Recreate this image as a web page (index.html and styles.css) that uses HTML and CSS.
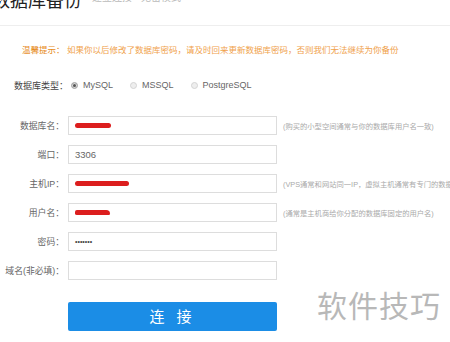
FILE: index.html
```html
<!DOCTYPE html>
<html lang="zh-CN">

<head>
  <meta charset="UTF-8">
  <title>数据库备份</title>
  <link rel="stylesheet" href="styles.css">
</head>

<body>
  <div class="page-header">
    <h1 class="page-title">数据库备份</h1>
    <span class="page-sub">建立连接 · 无密模式</span>
  </div>

  <p class="tip"><b>温馨提示：</b> 如果你以后修改了数据库密码，请及时回来更新数据库密码，否则我们无法继续为你备份</p>

  <div class="db-type">
    <span class="db-type-label">数据库类型：</span>
    <label class="radio-item"><span class="radio checked"></span>MySQL</label>
    <label class="radio-item"><span class="radio"></span>MSSQL</label>
    <label class="radio-item"><span class="radio"></span>PostgreSQL</label>
  </div>

  <div class="form">
    <div class="form-row">
      <label class="form-label">数据库名：</label>
      <div class="form-input"><span class="scribble s1"></span></div>
      <span class="form-hint">(购买的小型空间通常与你的数据库用户名一致)</span>
    </div>
    <div class="form-row">
      <label class="form-label">端口：</label>
      <div class="form-input">3306</div>
    </div>
    <div class="form-row">
      <label class="form-label">主机IP：</label>
      <div class="form-input"><span class="scribble s2"></span></div>
      <span class="form-hint">(VPS通常和网站同一IP，虚拟主机通常有专门的数据库地址)</span>
    </div>
    <div class="form-row">
      <label class="form-label">用户名：</label>
      <div class="form-input"><span class="scribble s3"></span></div>
      <span class="form-hint">(通常是主机商给你分配的数据库固定的用户名)</span>
    </div>
    <div class="form-row">
      <label class="form-label">密码：</label>
      <div class="form-input pwd">•••••••</div>
    </div>
    <div class="form-row">
      <label class="form-label">域名(非必填)：</label>
      <div class="form-input"></div>
    </div>

    <div class="connect-btn">连 接</div>
  </div>

  <!-- 水印 -->
  <div class="watermark">软件技巧</div>
</body>

</html>
```

FILE: styles.css
```css
body {
  margin: 0px;
  width: 450px;
  height: 342px;
  overflow: hidden;
  position: relative;
  background: #ffffff;
  font-family: "Liberation Sans", "Noto Sans CJK SC", sans-serif;
  color: #444444;
}

h1,
p {
  margin: 0px;
  padding: 0px;
}

.page-header {
  display: flex;
  align-items: flex-start;
  margin-top: -10px;
  height: 35px;
  border-bottom: 1px solid #eeeeee;
}

.page-title {
  margin-left: -8px;
  font-size: 18px;
  line-height: 22px;
  font-weight: normal;
  color: #222222;
}

.page-sub {
  margin-left: 10px;
  margin-top: 1px;
  font-size: 10px;
  line-height: 14px;
  color: #bbbbbb;
}

.tip {
  margin: 18px 0px 0px 22px;
  font-size: 8.5px;
  line-height: 12px;
  color: #f0a24c;
  white-space: nowrap;
}

.tip b {
  font-weight: normal;
  color: #e68a18;
}

.db-type {
  display: flex;
  align-items: center;
  margin: 22px 0px 0px 14px;
  height: 14px;
  font-size: 9px;
}

.db-type-label {
  width: 57px;
  color: #444444;
}

.radio-item {
  display: flex;
  align-items: center;
  margin-right: 17px;
  color: #666666;
}

.radio {
  width: 5px;
  height: 5px;
  border: 1px solid #d4d4d4;
  border-radius: 50%;
  background: #eeeeee;
  margin-right: 5px;
}

.radio.checked {
  background: #555555;
  border-color: #bbbbbb;
  box-shadow: inset 0px 0px 0px 1px #dddddd;
}

.form {
  margin-top: 24px;
}

.form-row {
  display: flex;
  align-items: center;
  height: 19px;
  margin-bottom: 10px;
  overflow: hidden;
}

.form-label {
  flex-shrink: 0;
  width: 64px;
  text-align: right;
  font-size: 8.8px;
  color: #666666;
  white-space: nowrap;
}

.form-input {
  flex-shrink: 0;
  box-sizing: border-box;
  display: flex;
  align-items: center;
  width: 209px;
  height: 19px;
  margin-left: 4px;
  padding-left: 6px;
  border: 1px solid #dddddd;
  font-size: 9.5px;
  color: #666666;
}

.form-input.pwd {
  font-size: 7px;
  color: #444444;
}

.form-hint {
  flex-shrink: 0;
  margin-left: 6px;
  font-size: 7.3px;
  color: #aaaaaa;
  white-space: nowrap;
}

.scribble {
  display: block;
  height: 5px;
  border-radius: 3px;
  background: #dc1e1e;
}

.s1 {
  width: 36px;
}

.s2 {
  width: 54px;
}

.s3 {
  width: 35px;
  border-radius: 3px 6px 2px 3px;
}

.connect-btn {
  width: 209px;
  height: 29px;
  margin: 22px 0px 0px 68px;
  border-radius: 2px;
  background: #1b8de6;
  color: #ffffff;
  font-size: 15px;
  line-height: 29px;
  text-align: center;
  letter-spacing: 4px;
}

.watermark {
  position: absolute;
  right: 9px;
  top: 288px;
  font-size: 30px;
  line-height: 38px;
  color: #b8b8b8;
  letter-spacing: 1px;
}
```
